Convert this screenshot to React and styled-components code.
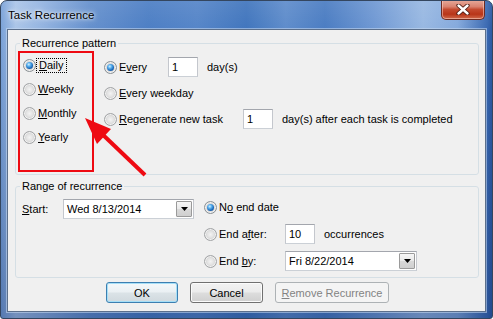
import React from "react";
import styled, { createGlobalStyle, css } from "styled-components";

const GlobalStyle = createGlobalStyle`
  html, body { margin: 0; padding: 0; background: #ffffff; }
  body { font-family: "Liberation Sans", Arial, sans-serif; font-size: 11px; color: #000; }
  *, *::before, *::after { box-sizing: border-box; }
`;

const Window = styled.div`
  position: relative;
  width: 493px;
  height: 319px;
  display: flex;
  flex-direction: column;
  border: 1px solid #34465f;
  border-radius: 7px 7px 3px 3px;
  overflow: hidden;
  background:
    linear-gradient(180deg, rgba(255,255,255,0.08) 0px, rgba(255,255,255,0) 30px, rgba(15,45,105,0.35) 100%),
    linear-gradient(90deg, #7aa2d8 0%, #abc5e8 3%, #95b5e1 8%, #6590cd 18%, #4c7ec4 30%, #5585c8 40%, #4075bd 50%, #5e8ccb 58%, #4a7cc2 66%, #6f98d3 76%, #98b8e2 86%, #84a9dc 93%, #3a69b2 99%, #2c59a1 100%);
`;

const TitleBar = styled.div`
  height: 28px;
  flex: none;
  display: flex;
  justify-content: space-between;
  align-items: flex-start;
  padding: 0 7px 0 7px;
`;

const Title = styled.div`
  padding-top: 7px;
  font-size: 11.5px;
  line-height: 14px;
  color: #000;
  text-shadow: 0 0 6px rgba(255,255,255,0.95), 0 0 3px rgba(255,255,255,0.9);
`;

const CloseButton = styled.div`
  width: 44px;
  height: 20px;
  margin-top: -1px;
  display: flex;
  align-items: center;
  justify-content: center;
  border: 1px solid #6e2b22;
  border-top: none;
  border-radius: 0 0 5px 5px;
  background: linear-gradient(180deg, #e7ab9c 0%, #d9826f 35%, #c44a2f 50%, #b83519 75%, #d06a4c 100%);
  box-shadow: inset 0 0 0 1px rgba(255,220,210,0.5);
`;

const Client = styled.div`
  flex: 1;
  margin: 0 6px 6px;
  border: 1px solid #5b6f8b;
  background: #f0f0f0;
  padding-top: 7px;
  display: flex;
  flex-direction: column;
  box-shadow: 0 0 0 1px rgba(200,218,242,0.55);
`;

const Group = styled.fieldset`
  width: 464px;
  margin: ${p => p.$top || 0}px 0 0 7px;
  padding: 0;
  min-width: 0;
  border: 1px solid #d5dfe5;
  border-radius: 3px;
`;

const Legend = styled.legend`
  margin-left: 4px;
  padding: 0 2px;
  font-size: 11px;
  line-height: 13px;
  color: #000;
`;

const GroupBody = styled.div`
  display: flex;
  height: ${p => p.$h}px;
  padding-left: ${p => p.$pl}px;
`;

const Column = styled.div`
  display: flex;
  flex-direction: column;
  width: ${p => (p.$w ? `${p.$w}px` : "auto")};
  padding-top: ${p => p.$pt}px;
  margin-left: ${p => p.$ml || 0}px;
  gap: ${p => p.$gap || 0}px;
`;

const Row = styled.div`
  display: flex;
  align-items: center;
  height: ${p => p.$h}px;
`;

const RadioCircle = styled.span`
  flex: none;
  width: 13px;
  height: 13px;
  border-radius: 50%;
  border: 1px solid #a2a4a6;
  background: radial-gradient(circle at 50% 50%, #f3f3f3 0%, #e3e3e3 40%, #c6c6c6 80%, #b5b5b5 100%);
  box-shadow: inset 0 0 0 1px #f2f2f2;
  display: flex;
  align-items: center;
  justify-content: center;
  ${p =>
    p.$checked &&
    css`
      border-color: #8a9094;
      &::after {
        content: "";
        width: 7px;
        height: 7px;
        border-radius: 50%;
        background: radial-gradient(circle at 40% 35%, #d4f1ff 0%, #59b0ee 30%, #1a66b7 65%, #0c3f7d 100%);
      }
    `}
`;

const Label = styled.span`
  flex: none;
  margin-left: ${p => (p.$ml !== undefined ? p.$ml : 2)}px;
  width: ${p => (p.$w ? `${p.$w}px` : "auto")};
  line-height: 13px;
  white-space: nowrap;
  ${p =>
    p.$focus &&
    css`
      outline: 1px dotted #000;
      outline-offset: 0;
      padding: 0 3px 0 2px;
    `}
`;

const Text = styled.span`
  margin-left: ${p => p.$ml || 0}px;
  white-space: nowrap;
  line-height: 13px;
  color: #000;
`;

const TextBox = styled.div`
  flex: none;
  width: 30px;
  height: 20px;
  border: 1px solid #abadb3;
  border-color: #a3a6ad #c4c7cd #cbd0d6 #c4c7cd;
  background: #fff;
  padding-left: 3px;
  line-height: 18px;
`;

const Combo = styled.div`
  flex: none;
  width: ${p => p.$w}px;
  height: 20px;
  border: 1px solid #a3a6ad;
  border-color: #a3a6ad #c4c7cd #cbd0d6 #c4c7cd;
  background: #fff;
  display: flex;
  align-items: center;
`;

const ComboText = styled.span`
  flex: 1;
  padding-left: 3px;
  line-height: 18px;
`;

const DropButton = styled.span`
  flex: none;
  width: 16px;
  height: 16px;
  margin-right: 1px;
  border: 1px solid #9a9a9a;
  border-radius: 1px;
  background: linear-gradient(180deg, #f6f6f6 0%, #e9e9e9 50%, #d9d9d9 51%, #cfcfcf 100%);
  display: flex;
  align-items: center;
  justify-content: center;
`;

const ButtonRow = styled.div`
  display: flex;
  gap: 12px;
  margin-top: 4px;
  padding-left: 98px;
`;

const Button = styled.button`
  width: ${p => p.$w}px;
  height: 21px;
  padding: 0;
  font: 11px "Liberation Sans", Arial, sans-serif;
  color: #000;
  border: 1px solid #707070;
  border-radius: 3px;
  background: linear-gradient(180deg, #f2f2f2 0%, #ebebeb 48%, #dddddd 52%, #cfcfcf 100%);
  box-shadow: inset 0 0 0 1px #fbfbfb;
  ${p =>
    p.$default &&
    css`
      border-color: #3c7fb1;
      box-shadow: inset 0 0 0 1px #a6dff7;
      background: linear-gradient(180deg, #f4f8fa 0%, #eaf0f3 48%, #dbe3e7 52%, #d0d9de 100%);
    `}
  &:disabled {
    border-color: #adb2b5;
    background: #f4f4f4;
    box-shadow: none;
    color: #838383;
  }
`;

const Overlay = styled.svg`
  position: absolute;
  left: -1px;
  top: -1px;
  pointer-events: none;
`;

function Radio({ checked, children, labelWidth, focus, gap }) {
  return (
    <>
      <RadioCircle $checked={checked} />
      <Label $w={labelWidth} $focus={focus} $ml={gap}>
        {children}
      </Label>
    </>
  );
}

function DropArrow() {
  return (
    <svg width="7" height="4" viewBox="0 0 7 4">
      <polygon points="0,0 7,0 3.5,4" fill="#000" />
    </svg>
  );
}

export default function App() {
  return (
    <>
      <GlobalStyle />
      <Window>
        <TitleBar>
          <Title>Task Recurrence</Title>
          <CloseButton>
            <svg width="14" height="11" viewBox="0 0 14 11">
              <path d="M2.5 1.5 L11.5 9.5 M11.5 1.5 L2.5 9.5" stroke="#4a1a12" strokeWidth="4.2" strokeLinecap="round" />
              <path d="M2.5 1.5 L11.5 9.5 M11.5 1.5 L2.5 9.5" stroke="#ffffff" strokeWidth="2.4" strokeLinecap="round" />
            </svg>
          </CloseButton>
        </TitleBar>
        <Client>
          <Group>
            <Legend>Recurrence pattern</Legend>
            <GroupBody $h={124} $pl={7}>
              <Column $w={81} $pt={3}>
                <Row $h={24}>
                  <Radio checked focus gap={1}>
                    <u>D</u>aily
                  </Radio>
                </Row>
                <Row $h={24}>
                  <Radio>
                    <u>W</u>eekly
                  </Radio>
                </Row>
                <Row $h={24}>
                  <Radio>
                    <u>M</u>onthly
                  </Radio>
                </Row>
                <Row $h={24}>
                  <Radio>
                    <u>Y</u>early
                  </Radio>
                </Row>
              </Column>
              <Column $pt={4}>
                <Row $h={26}>
                  <Radio checked labelWidth={49}>
                    E<u>v</u>ery
                  </Radio>
                  <TextBox>1</TextBox>
                  <Text $ml={9}>day(s)</Text>
                </Row>
                <Row $h={26}>
                  <Radio>
                    <u>E</u>very weekday
                  </Radio>
                </Row>
                <Row $h={26}>
                  <Radio labelWidth={124}>
                    <u>R</u>egenerate new task
                  </Radio>
                  <TextBox>1</TextBox>
                  <Text $ml={9}>day(s) after each task is completed</Text>
                </Row>
              </Column>
            </GroupBody>
          </Group>

          <Group $top={5}>
            <Legend>Range of recurrence</Legend>
            <GroupBody $h={84} $pl={6}>
              <Column $pt={6}>
                <Row $h={20}>
                  <Label $ml={0} $w={41}>
                    <u>S</u>tart:
                  </Label>
                  <Combo $w={131}>
                    <ComboText>Wed 8/13/2014</ComboText>
                    <DropButton>
                      <DropArrow />
                    </DropButton>
                  </Combo>
                </Row>
              </Column>
              <Column $pt={4} $ml={10} $gap={7}>
                <Row $h={20}>
                  <Radio checked>
                    N<u>o</u> end date
                  </Radio>
                </Row>
                <Row $h={20}>
                  <Radio labelWidth={66}>
                    End a<u>f</u>ter:
                  </Radio>
                  <TextBox>10</TextBox>
                  <Text $ml={9}>occurrences</Text>
                </Row>
                <Row $h={20}>
                  <Radio labelWidth={66}>
                    End <u>b</u>y:
                  </Radio>
                  <Combo $w={132}>
                    <ComboText>Fri 8/22/2014</ComboText>
                    <DropButton>
                      <DropArrow />
                    </DropButton>
                  </Combo>
                </Row>
              </Column>
            </GroupBody>
          </Group>

          <ButtonRow>
            <Button $w={72} $default>
              OK
            </Button>
            <Button $w={73}>Cancel</Button>
            <Button $w={114} disabled>
              <u>R</u>emove Recurrence
            </Button>
          </ButtonRow>
        </Client>
        <Overlay width="493" height="319" viewBox="0 0 493 319">
          <rect x="19" y="52" width="74" height="119" fill="none" stroke="#ee0a12" strokeWidth="2" />
          <line x1="145" y1="175" x2="100" y2="132" stroke="#ee0a12" strokeWidth="4" />
          <polygon points="85,118 111,129 97,144" fill="#ee0a12" />
        </Overlay>
      </Window>
    </>
  );
}
